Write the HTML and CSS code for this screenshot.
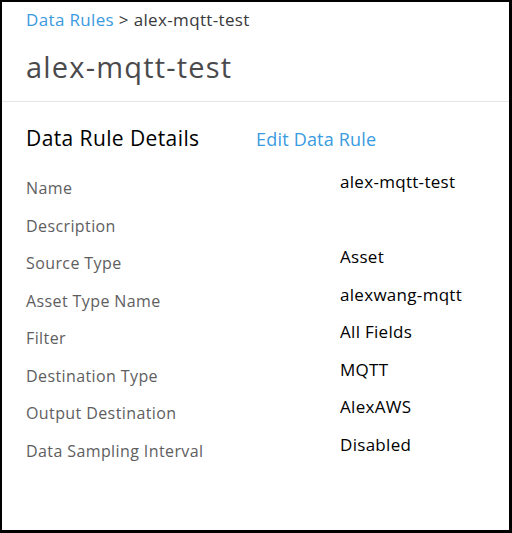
FILE: index.html
```html
<!DOCTYPE html>
<html>
<head>
<meta charset="utf-8">
<link rel="stylesheet" href="styles.css">
</head>
<body>
<div class="frame">
  <header class="head">
    <div class="crumbs"><a class="link">Data Rules</a> &gt; alex-mqtt-test</div>
    <h1 class="title">alex-mqtt-test</h1>
  </header>
  <section class="details">
    <div class="sec-head">
      <h2 class="sec-title">Data Rule Details</h2>
      <a class="link edit">Edit Data Rule</a>
    </div>
    <div class="rows">
      <div class="row"><span class="label">Name</span><span class="value">alex-mqtt-test</span></div>
      <div class="row"><span class="label">Description</span><span class="value"></span></div>
      <div class="row"><span class="label">Source Type</span><span class="value">Asset</span></div>
      <div class="row"><span class="label">Asset Type Name</span><span class="value">alexwang-mqtt</span></div>
      <div class="row"><span class="label">Filter</span><span class="value">All Fields</span></div>
      <div class="row"><span class="label">Destination Type</span><span class="value">MQTT</span></div>
      <div class="row"><span class="label">Output Destination</span><span class="value">AlexAWS</span></div>
      <div class="row"><span class="label">Data Sampling Interval</span><span class="value">Disabled</span></div>
    </div>
  </section>
</div>
</body>
</html>
```
FILE: styles.css
```css
html, body { margin: 0; padding: 0; background: #fff; }
body { font-family: "Open Sans", "Liberation Sans", Arial, sans-serif; }
.frame {
  width: 512px; height: 533px; box-sizing: border-box;
  border-style: solid; border-color: #000;
  border-width: 2px 3px 3px 2px;
  background: #fff;
}
.head { padding: 8px 0 0 24px; border-bottom: 1px solid #e6e6ea; height: 100px; box-sizing: border-box; }
.crumbs { font-size: 17px; letter-spacing: 0.35px; line-height: 20px; color: #39393b; }
.link { color: #3a9be0; }
.title { margin: 19px 0 0; font-size: 29px; letter-spacing: 1.2px; line-height: 36px; font-weight: 400; color: #4a4a4d; }
.details { padding: 22px 0 0 24px; }
.sec-head { display: flex; align-items: baseline; }
.sec-title { margin: 0; font-size: 21px; letter-spacing: 0.4px; font-weight: 400; color: #000; line-height: 28px; width: 230px; }
.edit { font-size: 18px; letter-spacing: 0.2px; }
.rows { margin-top: 20px; }
.row { display: flex; height: 37.5px; }
.label { width: 314px; font-size: 16px; letter-spacing: 0.4px; line-height: 20px; color: #5e5e61; padding-top: 6px; }
.value { font-size: 17px; letter-spacing: 0.3px; line-height: 20px; color: #000; }
```
